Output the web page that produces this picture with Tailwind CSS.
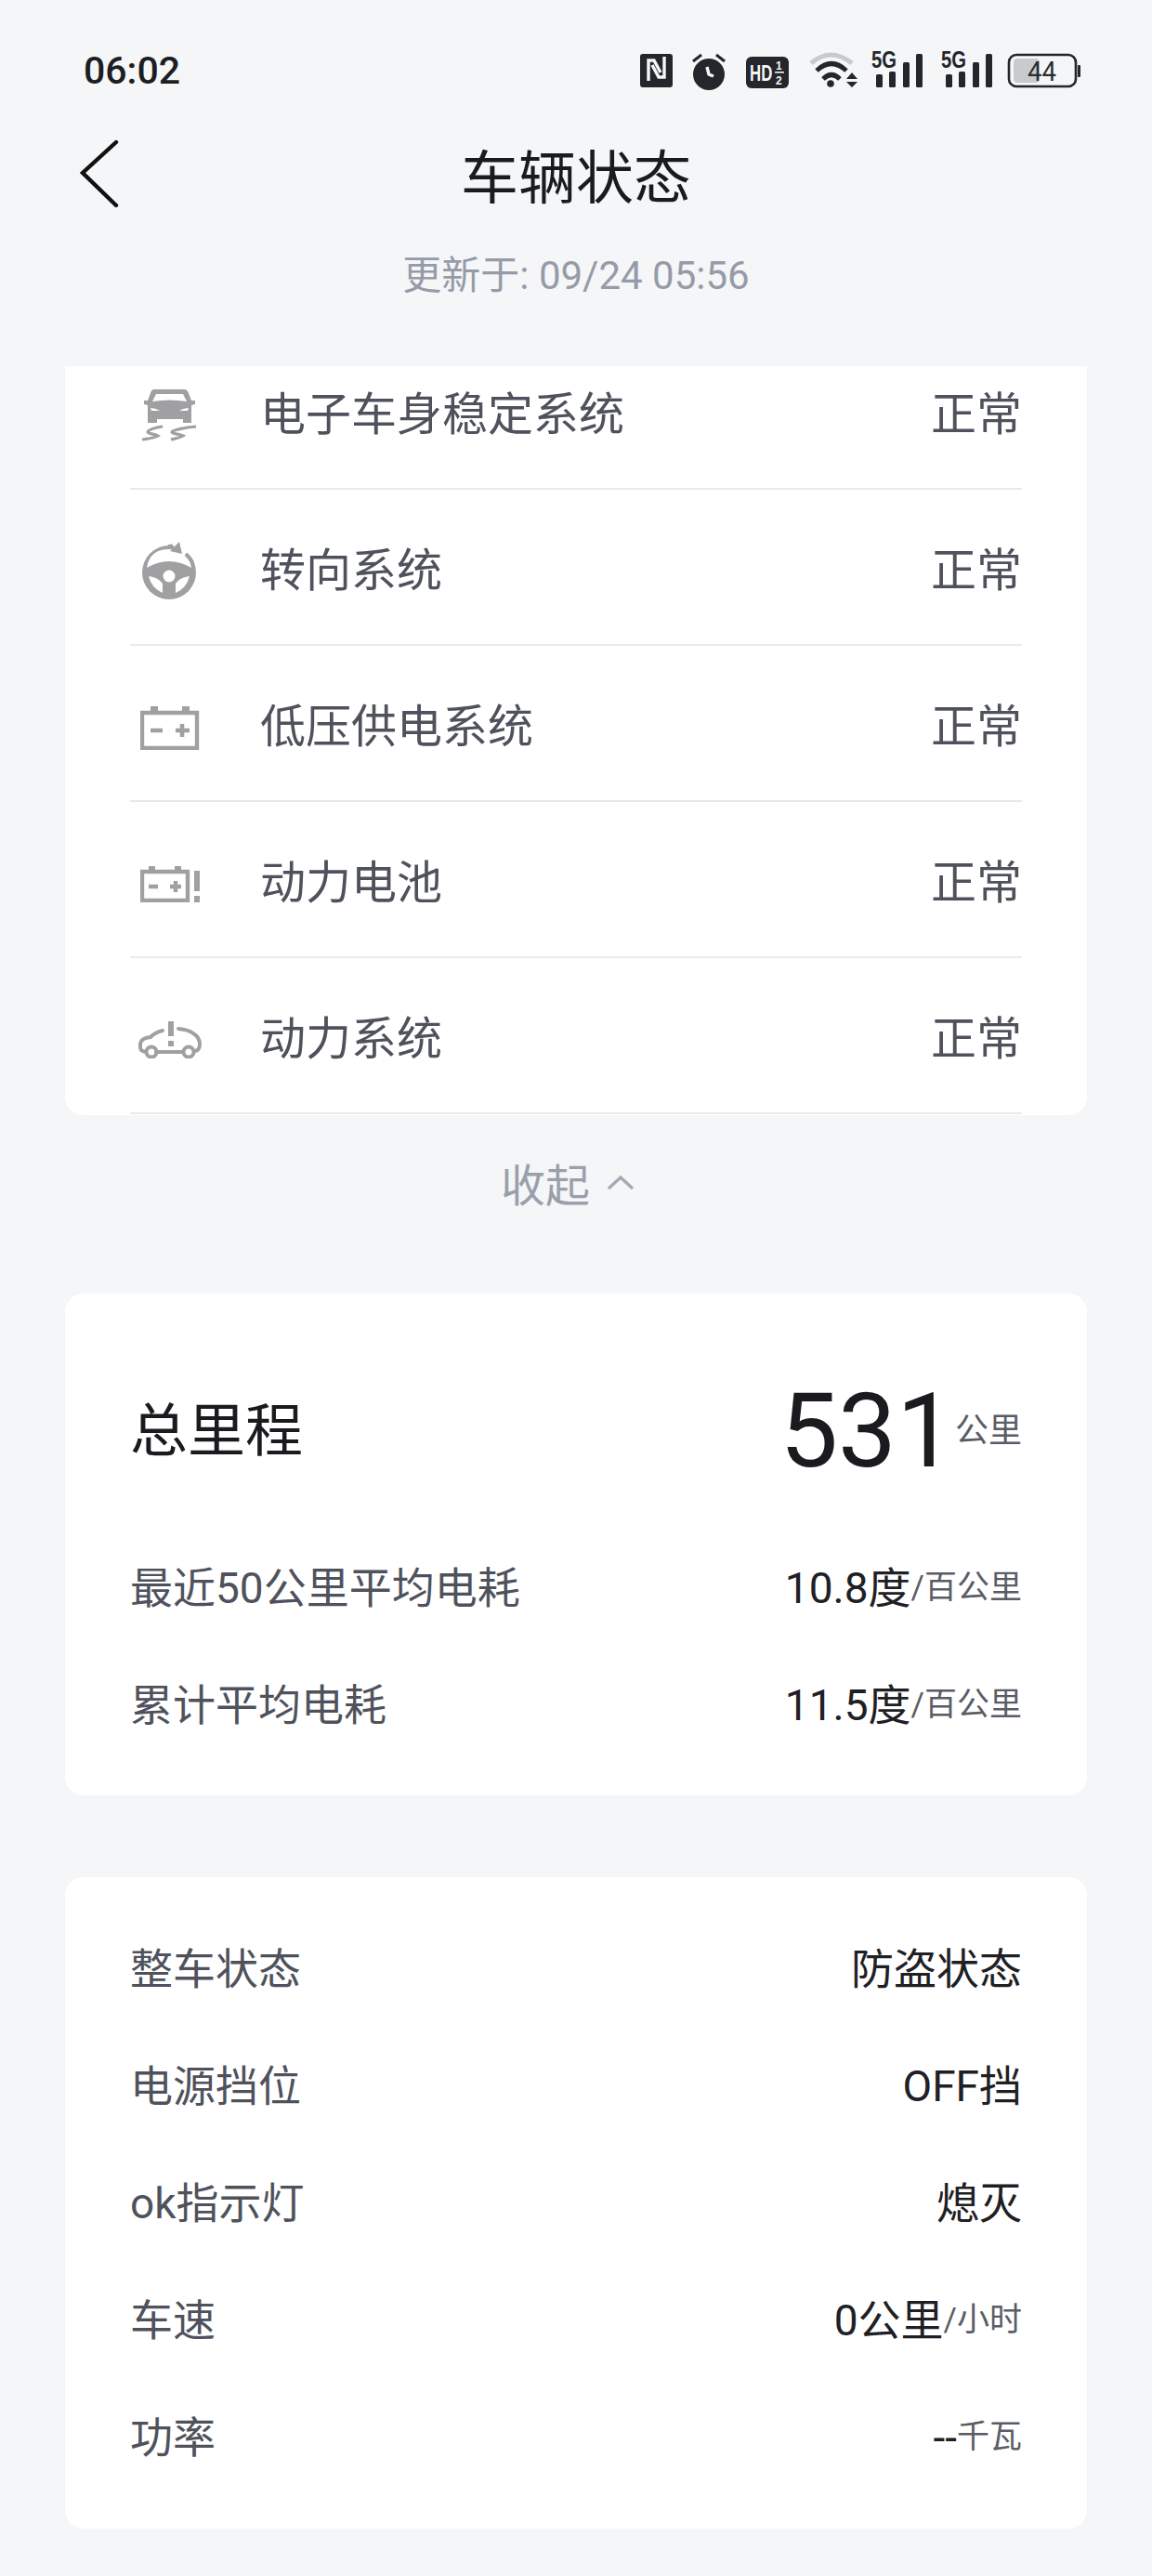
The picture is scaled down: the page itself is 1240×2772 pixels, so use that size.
<!DOCTYPE html>
<html lang="zh">
<head>
  <meta charset="UTF-8">
  <meta name="viewport" content="width=device-width, initial-scale=1.0">
  <title>车辆状态</title>
  <script src="https://cdn.jsdelivr.net/npm/@tailwindcss/browser@4"></script>
</head>
<body class="bg-[#f5f6f8]">
  <div class="w-[1240px] h-[2772px] overflow-hidden font-['Roboto','Noto_Sans_CJK_SC',sans-serif] bg-[#f5f6f8]">

    <!-- status bar -->
    <div class="h-[148px] pl-[90px] pr-[76px] pt-[52px] flex items-start justify-between text-[#1c1e22]">
      <span class="text-[41px] leading-[48px] font-medium">06:02</span>
      <svg class="mt-[-7px]" width="475" height="52" viewBox="0 -10 475 52" fill="#23262a">
        <!-- nfc -->
        <rect x="0" y="3" width="35" height="36" rx="3"/>
        <path d="M9 32V10h6l7 13M26 6v22h-6l-7-13" fill="none" stroke="#f5f6f8" stroke-width="3.4"/>
        <!-- alarm -->
        <circle cx="74" cy="25" r="17"/>
        <path d="M57 11l9-7M91 11l-9-7" stroke="#23262a" stroke-width="3"/>
        <path d="M72 17l2 8 5 2" fill="none" stroke="#f5f6f8" stroke-width="3.4"/>
        <!-- hd -->
        <rect x="114" y="6" width="46" height="34" rx="6"/>
        <text transform="translate(118 32) scale(.7 1)" font-family="Liberation Sans" font-size="24" font-weight="700" fill="#f5f6f8">HD</text>
        <text x="146" y="20" font-family="Liberation Sans" font-size="12" font-weight="700" fill="#f5f6f8">1</text>
        <rect x="145" y="22" width="10" height="1.6" fill="#f5f6f8"/>
        <text x="146" y="36" font-family="Liberation Sans" font-size="12" font-weight="700" fill="#f5f6f8">2</text>
        <!-- wifi -->
        <path d="M184 13Q205 -5 228 13" fill="none" stroke="#c9cacc" stroke-width="5"/>
        <path d="M190 21Q206 6 222 21M197 30Q206 21 215 30" fill="none" stroke="#23262a" stroke-width="5"/>
        <circle cx="205" cy="35" r="3.8"/>
        <path d="M222 30l6-7 6 7zM222 33l6 6 6-6z"/>
        <!-- sim 1 -->
        <text x="249" y="18" font-family="Liberation Sans" font-size="25" font-weight="700" textLength="27" lengthAdjust="spacingAndGlyphs">5G</text>
        <rect x="254" y="25" width="7" height="14" rx="1.5"/><rect x="268" y="22" width="7" height="17" rx="1.5"/><rect x="283" y="12" width="7" height="27" rx="1.5"/><rect x="297" y="3" width="7" height="36" rx="1.5"/>
        <!-- sim 2 -->
        <text x="324" y="18" font-family="Liberation Sans" font-size="25" font-weight="700" textLength="27" lengthAdjust="spacingAndGlyphs">5G</text>
        <rect x="329" y="25" width="7" height="14" rx="1.5"/><rect x="343" y="22" width="7" height="17" rx="1.5"/><rect x="358" y="12" width="7" height="27" rx="1.5"/><rect x="372" y="3" width="7" height="36" rx="1.5"/>
        <!-- battery -->
        <rect x="397" y="4" width="72" height="34" rx="8" fill="none" stroke="#23262a" stroke-width="2.6"/>
        <rect x="402" y="8" width="28" height="26" rx="4" fill="#c9cacc"/>
        <rect x="471" y="15" width="3" height="13" rx="1"/>
        <text x="417" y="32" font-family="Roboto" font-size="29" fill="#2a2c30" textLength="31" lengthAdjust="spacingAndGlyphs">44</text>
      </svg>
    </div>

    <!-- header -->
    <div class="relative h-[246px] pt-[5px]">
      <svg class="absolute left-[86px] top-[0px]" width="44" height="78" viewBox="0 0 44 78" fill="none">
        <path d="M39 5L3 38l36 35" stroke="#111" stroke-width="4.4" stroke-linecap="round"/>
      </svg>
      <div class="text-center text-[62px] leading-[80px] text-[#1a1b1e]">车辆状态</div>
      <div class="mt-[36px] text-center text-[42px] leading-[56px] text-[#969ba8]">更新于: 09/24 05:56</div>
    </div>

    <!-- system list, scrolled -->
    <div class="mx-[70px] h-[806px] bg-white rounded-b-[20px] overflow-hidden px-[70px]">
      <div class="flex items-center justify-between h-[133px] pb-[26px] border-b-2 border-[#e8e9eb]">
        <div class="flex items-center">
          <div class="w-[140px] h-[56px] pl-[11px]">
            <svg width="64" height="56" viewBox="0 0 64 56" fill="#a0a0a2">
              <path fill-rule="evenodd" d="M15 0H48Q50 0 52 4L55 12H59V16L55 17V36H46V32H18V36H8V17L4 16V12H8L11 4Q12 0 15 0ZM17 5H46L50 13Q32 10 13 13ZM11 20Q16 20 21 23H12ZM52 20Q47 20 42 23H51Z"/>
              <path d="M24 40C15 41 8 44 8 46C8 48 16 48 19 50C14 53 7 53 2 54M60 40C48 41 34 44 34 46C34 48 42 48 46 50C41 53 37 53 33 54" fill="none" stroke="#a0a0a2" stroke-width="3.2"/>
            </svg>
          </div>
          <span class="text-[49px] text-[#4f525c]">电子车身稳定系统</span>
        </div>
        <span class="text-[49px] text-[#4f525c]">正常</span>
      </div>
      <div class="flex items-center justify-between h-[168px] pt-[10px] border-b-2 border-[#e8e9eb]">
        <div class="flex items-center">
          <div class="w-[140px] h-[64px] pl-[13px]">
            <svg width="60" height="64" viewBox="0 0 60 64" fill="#a0a0a2">
              <circle cx="29" cy="33" r="29"/>
              <path d="M5 28Q8 8 29 8Q50 8 53 28Q29 14 5 28Z" fill="#fff"/>
              <circle cx="29" cy="37" r="6.5" fill="#fff"/>
              <path d="M7 37Q17 38 22 45L22 55Q10 50 7 37ZM51 37Q41 38 36 45L36 55Q48 50 51 37Z" fill="#fff"/>
              <path d="M31 -2L60 -2L60 16L48 18L44 14L36 8Z" fill="#fff"/>
              <path d="M40 0L43 13L30 10Z"/>
              <path d="M28 5.5L33 5" fill="none" stroke="#a0a0a2" stroke-width="5"/>
              <path d="M47 13Q52 18 54 22" fill="none" stroke="#a0a0a2" stroke-width="4"/>
            </svg>
          </div>
          <span class="text-[49px] text-[#4f525c]">转向系统</span>
        </div>
        <span class="text-[49px] text-[#4f525c]">正常</span>
      </div>
      <div class="flex items-center justify-between h-[168px] pt-[10px] border-b-2 border-[#e8e9eb]">
        <div class="flex items-center">
          <div class="w-[140px] h-[47px] pl-[11px]">
            <svg width="64" height="47" viewBox="0 0 64 47" fill="none">
              <path d="M2 7h59v38H2z" stroke="#a0a0a2" stroke-width="4.4"/>
              <path d="M11 0h8v6h-8zM45 0h8v6h-8z" fill="#a0a0a2"/>
              <path d="M11 26h13M38 26h15M45 19v14" stroke="#a0a0a2" stroke-width="4.6"/>
            </svg>
          </div>
          <span class="text-[49px] text-[#4f525c]">低压供电系统</span>
        </div>
        <span class="text-[49px] text-[#4f525c]">正常</span>
      </div>
      <div class="flex items-center justify-between h-[168px] pt-[10px] border-b-2 border-[#e8e9eb]">
        <div class="flex items-center">
          <div class="w-[140px] h-[39px] pl-[11px]">
            <svg width="66" height="39" viewBox="0 0 66 39" fill="none">
              <path d="M2 6h49v31H2z" stroke="#a0a0a2" stroke-width="4.4"/>
              <path d="M9 0h7v6H9zM37 0h7v6h-7zM58 5h6v22h-6zM58 32h6v7h-6z" fill="#a0a0a2"/>
              <path d="M9 22h10M32 22h12M38 16v12" stroke="#a0a0a2" stroke-width="4.4"/>
            </svg>
          </div>
          <span class="text-[49px] text-[#4f525c]">动力电池</span>
        </div>
        <span class="text-[49px] text-[#4f525c]">正常</span>
      </div>
      <div class="flex items-center justify-between h-[168px] pt-[10px] border-b-2 border-[#e8e9eb]">
        <div class="flex items-center">
          <div class="w-[140px] h-[40px] pl-[8px]">
            <svg width="70" height="40" viewBox="0 0 70 40" fill="none">
              <path d="M27 10q-8 2-13 7-10 1-11 7v4q0 4 6 5M20 33h28M62 32q5-1 5-7 0-8-7-12-5-4-16-5" stroke="#a0a0a2" stroke-width="4" stroke-linecap="round"/>
              <circle cx="15" cy="33" r="5.5" stroke="#a0a0a2" stroke-width="4"/>
              <circle cx="55" cy="33" r="5.5" stroke="#a0a0a2" stroke-width="4"/>
              <path d="M33 0h6v16h-6zM33 21h6v6h-6z" fill="#a0a0a2"/>
            </svg>
          </div>
          <span class="text-[49px] text-[#4f525c]">动力系统</span>
        </div>
        <span class="text-[49px] text-[#4f525c]">正常</span>
      </div>
    </div>

    <!-- collapse -->
    <div class="h-[192px] pt-[42px] flex justify-center text-[#9a9fac]">
      <div class="flex items-center h-[70px] ml-[-18px]">
        <span class="text-[48px]">收起</span>
        <svg class="ml-[18px] mt-[-10px]" width="30" height="16" viewBox="0 0 30 16" fill="none"><path d="M2 15L15 3l13 12" stroke="#a5a9b5" stroke-width="3.4"/></svg>
      </div>
    </div>

    <!-- mileage -->
    <div class="mx-[70px] h-[540px] bg-white rounded-[20px] px-[70px] pt-[83px]">
      <div class="flex items-center justify-between h-[130px]">
        <span class="text-[62px] text-[#1a1b1e]">总里程</span>
        <div class="flex items-center">
          <span class="text-[112px] leading-[130px] text-[#1a1b1e]">531</span>
          <span class="text-[36px] text-[#5a5d66]">公里</span>
        </div>
      </div>
      <div class="flex items-center justify-between h-[126px] mt-[41px]">
        <span class="text-[46px] text-[#4f525c]">最近50公里平均电耗</span>
        <div class="flex items-center text-[46px] text-[#1f2024]"><span>10.8度</span><span class="text-[35px] text-[#5a5d66]">/百公里</span></div>
      </div>
      <div class="flex items-center justify-between h-[126px]">
        <span class="text-[46px] text-[#4f525c]">累计平均电耗</span>
        <div class="flex items-center text-[46px] text-[#1f2024]"><span>11.5度</span><span class="text-[35px] text-[#5a5d66]">/百公里</span></div>
      </div>
    </div>

    <!-- state -->
    <div class="mx-[70px] mt-[88px] h-[701px] bg-white rounded-[20px] px-[70px] pt-[36px]">
      <div class="flex items-center justify-between h-[126px]">
        <span class="text-[46px] text-[#4f525c]">整车状态</span>
        <span class="text-[46px] text-[#1f2024]">防盗状态</span>
      </div>
      <div class="flex items-center justify-between h-[126px]">
        <span class="text-[46px] text-[#4f525c]">电源挡位</span>
        <span class="text-[46px] text-[#1f2024]">OFF挡</span>
      </div>
      <div class="flex items-center justify-between h-[126px]">
        <span class="text-[46px] text-[#4f525c]">ok指示灯</span>
        <span class="text-[46px] text-[#1f2024]">熄灭</span>
      </div>
      <div class="flex items-center justify-between h-[126px]">
        <span class="text-[46px] text-[#4f525c]">车速</span>
        <div class="flex items-center text-[46px] text-[#1f2024]"><span>0公里</span><span class="text-[35px] text-[#5a5d66]">/小时</span></div>
      </div>
      <div class="flex items-center justify-between h-[126px]">
        <span class="text-[46px] text-[#4f525c]">功率</span>
        <div class="flex items-center text-[46px] text-[#1f2024]"><span>--</span><span class="text-[35px] text-[#5a5d66]">千瓦</span></div>
      </div>
    </div>
  </div>
</body>
</html>
